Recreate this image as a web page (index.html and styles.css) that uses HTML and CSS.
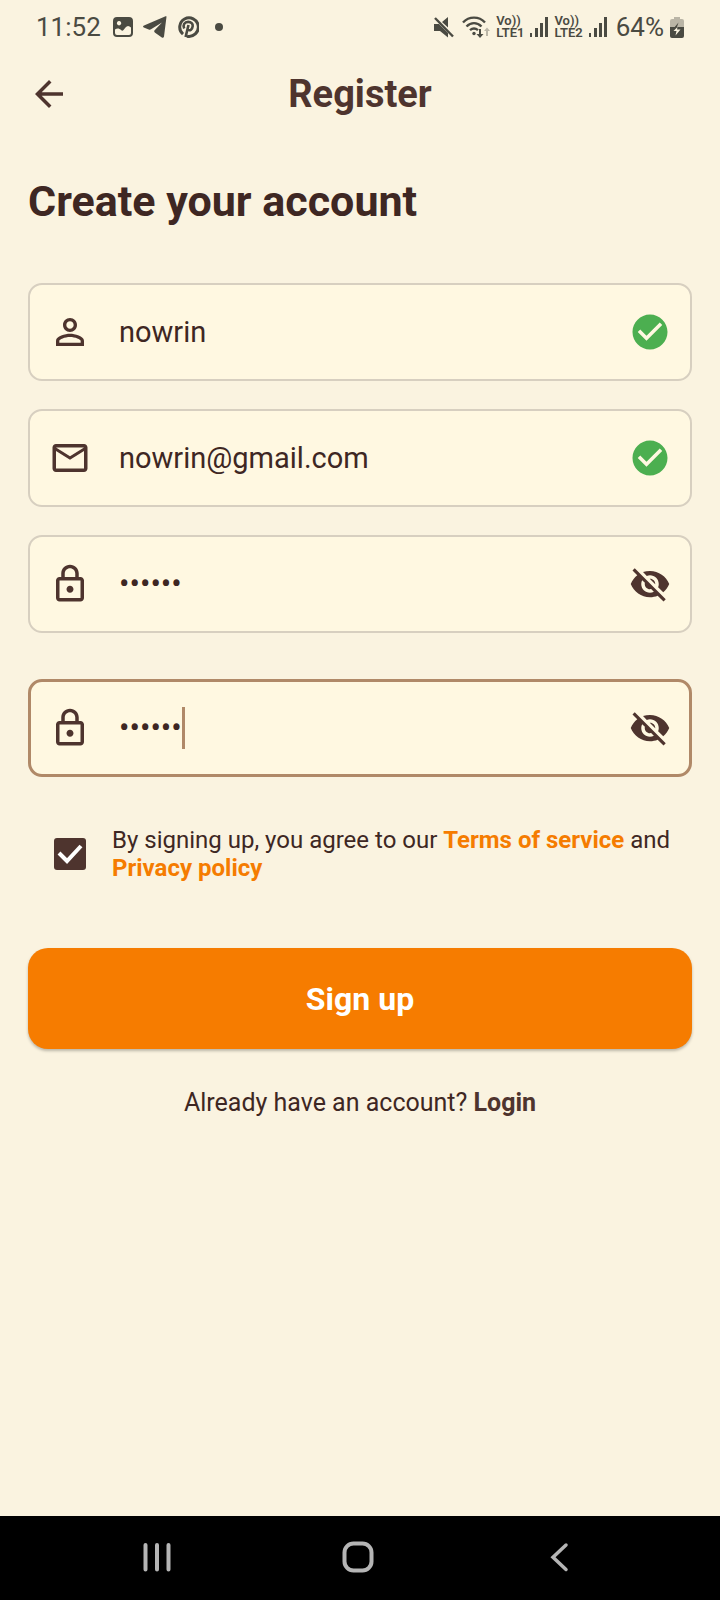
FILE: index.html
```html
<!DOCTYPE html>
<html lang="en">
<head>
<meta charset="utf-8">
<meta name="viewport" content="width=device-width, initial-scale=1">
<title>Register</title>
<link rel="stylesheet" href="styles.css">
</head>
<body class="screen">
  <svg class="sprite" aria-hidden="true">
    <symbol id="lock" viewBox="0 0 24 24"><path d="M18 8h-1V6c0-2.760-2.240-5-5-5S7 3.240 7 6v2H6c-1.100 0-2 .9-2 2v10c0 1.100.9 2 2 2h12c1.100 0 2-.9 2-2V10c0-1.100-.9-2-2-2zM9 6c0-1.660 1.340-3 3-3s3 1.340 3 3v2H9V6zm9 14H6V10h12v10zm-6-3c1.100 0 2-.9 2-2s-.9-2-2-2-2 .9-2 2 .9 2 2 2z"/></symbol>
    <symbol id="valid" viewBox="0 0 24 24"><path d="M12 2C6.480 2 2 6.480 2 12s4.480 10 10 10 10-4.480 10-10S17.520 2 12 2zm-2 15-5-5 1.410-1.410L10 14.170l7.590-7.590L19 8l-9 9z"/></symbol>
    <symbol id="hidden-eye" viewBox="0 0 24 24"><path d="M12 7c2.76 0 5 2.24 5 5 0 .65-.13 1.26-.36 1.83l2.92 2.92c1.51-1.26 2.7-2.89 3.43-4.75-1.73-4.39-6-7.5-11-7.5-1.4 0-2.74.25-3.98.7l2.16 2.16C10.74 7.13 11.35 7 12 7zM2 4.27l2.28 2.28.46.46C3.08 8.3 1.78 10.02 1 12c1.73 4.39 6 7.5 11 7.5 1.55 0 3.03-.3 4.38-.84l.42.42L19.73 22 21 20.73 3.27 3 2 4.27zM7.53 9.8l1.55 1.55c-.05.21-.08.43-.08.65 0 1.66 1.34 3 3 3 .22 0 .44-.03.65-.08l1.55 1.55c-.67.33-1.41.53-2.2.53-2.76 0-5-2.24-5-5 0-.79.2-1.53.53-2.2zm4.31-.78 3.15 3.15.02-.16c0-1.66-1.34-3-3-3l-.17.01z"/></symbol>
    <symbol id="signal" viewBox="0 0 18 20"><path d="M0 16h2v4H0zM5 11h3v9H5zM10 6h3v14h-3zM15 0h3v20h-3z"/></symbol>
  </svg>

  <div class="status">
    <div class="status-left">
      <span class="clock">11:52</span>
      <svg class="photo" width="20" height="20" viewBox="0 0 20 20" aria-hidden="true"><path fill-rule="evenodd" d="M4 0h12a4 4 0 0 1 4 4v12a4 4 0 0 1-4 4H4a4 4 0 0 1-4-4V4a4 4 0 0 1 4-4zM6 4a2.200 2.200 0 1 0 .1 0zM2 12.500v3.500a2 2 0 0 0 2 2h12a2 2 0 0 0 2-2v-5.500c-2-2-4-2-5.500 0L10.500 13c-.8 1-1.500 1-2.500 0-2-2-4-2-6-.5z"/></svg>
      <svg width="24" height="22" viewBox="0 0 24 22" aria-hidden="true"><path d="M23.500.8 21 20.500c-.2 1.200-1.200 1.500-2.200.9l-7-5c-.8-.6-.8-1.400-.2-2.100L19 6.500 8 13.300c-.8.5-1.500.4-2.300.1L.8 11.500c-1.100-.5-1-1.500.2-2L22 .4c.9-.3 1.600-.2 1.500.4z"/></svg>
      <svg width="22" height="22" viewBox="0 0 22 22" aria-hidden="true"><path class="line" stroke-width="3" d="M6 18.200A9.300 9.300 0 1 1 10 20.200"/><path class="line" stroke-width="2.600" d="M7.200 12.500C5.500 9 7.500 5.900 11.200 5.900c3 0 4.800 2 4.500 4.300-.3 3-2.700 5-4.700 3.600M11.500 9 8.600 21"/></svg>
      <span class="dot"></span>
    </div>
    <div class="status-right">
      <svg class="mute" width="20" height="21" viewBox="0 0 20 21" aria-hidden="true"><path d="M0 7h5l9 9v4.500L6 14H0zM8 5l6-5v10.500z"/><path class="line" stroke-width="2.400" d="M1 1l18 18.500"/></svg>
      <svg class="wifi" width="28" height="22" viewBox="0 0 28 22" aria-hidden="true"><g class="line" stroke-width="2.400"><path d="M1 6.500c6-6.500 16-6.500 22 0M4.500 10.500c4.500-4.500 10.500-4.500 15 0M8 14.200c2.500-2.200 5.500-2.200 8 0"/></g><circle cx="12" cy="17.500" r="1.700"/><path d="M17 13h2v5h2.500L18 22l-3.500-4H17z"/><path class="faint" d="M24 20v-5h-2l3-3.500 3 3.500h-2v5z"/></svg>
      <span class="volte">Vo))<br>LTE1</span>
      <svg width="18" height="20" aria-hidden="true"><use href="#signal"/></svg>
      <span class="volte">Vo))<br>LTE2</span>
      <svg width="18" height="20" aria-hidden="true"><use href="#signal"/></svg>
      <span class="percent">64%</span>
      <svg width="14" height="21" viewBox="0 0 14 21" aria-hidden="true"><path class="faint" d="M4 0h6v2h2a2 2 0 0 1 2 2v6H0V4a2 2 0 0 1 2-2h2z"/><path d="M0 10h14v9a2 2 0 0 1-2 2H2a2 2 0 0 1-2-2z"/><path d="M8.500 5.500 3 12h8l1-2H7z"/><path class="bolt" d="M7.500 10 3.500 14h3l-1 4.500 5-6H7z"/></svg>
    </div>
  </div>

  <header class="appbar">
    <button class="icon-button" type="button" aria-label="Back"><svg class="icon" viewBox="0 0 24 24"><path d="M20 11H7.830l5.590-5.590L12 4l-8 8 8 8 1.410-1.410L7.830 13H20v-2z"/></svg></button>
    <h1 class="title">Register</h1>
  </header>

  <main class="content">
    <h2 class="heading">Create your account</h2>
    <form class="form">
      <div class="field">
        <svg class="icon" viewBox="0 0 24 24" aria-hidden="true"><path d="M12 5.900c1.160 0 2.100.94 2.100 2.100s-.94 2.100-2.100 2.100S9.900 9.160 9.900 8s.94-2.100 2.100-2.100m0 9c2.970 0 6.100 1.460 6.100 2.100v1.100H5.900V17c0-.64 3.130-2.100 6.100-2.100M12 4C9.790 4 8 5.790 8 8s1.790 4 4 4 4-1.790 4-4-1.790-4-4-4zm0 9c-2.670 0-8 1.340-8 4v3h16v-3c0-2.660-5.330-4-8-4z"/></svg>
        <input class="input" type="text" aria-label="Name" value="nowrin">
        <svg class="icon valid" aria-hidden="true"><use href="#valid"/></svg>
      </div>
      <div class="field">
        <svg class="icon" viewBox="0 0 24 24" aria-hidden="true"><path d="M22 6c0-1.100-.9-2-2-2H4c-1.100 0-2 .9-2 2v12c0 1.100.9 2 2 2h16c1.100 0 2-.9 2-2V6zm-2 0-8 5-8-5h16zm0 12H4V8l8 5 8-5v10z"/></svg>
        <input class="input" type="email" aria-label="Email" value="nowrin@gmail.com">
        <svg class="icon valid" aria-hidden="true"><use href="#valid"/></svg>
      </div>
      <div class="field">
        <svg class="icon" aria-hidden="true"><use href="#lock"/></svg>
        <input class="input secret" type="password" aria-label="Password" value="secret">
        <button class="icon-button" type="button" aria-label="Show password"><svg class="icon"><use href="#hidden-eye"/></svg></button>
      </div>
      <div class="field focused">
        <svg class="icon" aria-hidden="true"><use href="#lock"/></svg>
        <div class="entry">
          <input class="input secret" type="password" aria-label="Confirm password" value="secret">
          <span class="caret"></span>
        </div>
        <button class="icon-button" type="button" aria-label="Show password"><svg class="icon"><use href="#hidden-eye"/></svg></button>
      </div>

      <div class="terms">
        <span class="check">
          <input class="box" type="checkbox" id="agree" checked>
          <svg class="tick" viewBox="0 0 32 32" aria-hidden="true"><path d="M5 15l8 8L27 8"/></svg>
        </span>
        <label class="terms-text" for="agree">By signing up, you agree to our <a class="accent" href="#">Terms of service</a> and <a class="accent" href="#">Privacy policy</a></label>
      </div>

      <button class="submit" type="button">Sign up</button>
    </form>
    <p class="login">Already have an account? <a class="login-link" href="#">Login</a></p>
  </main>

  <nav class="navbar">
    <button class="nav-button" type="button" aria-label="Recent apps"><svg width="32" height="32" viewBox="0 0 32 32"><path stroke-width="4" d="M4.500 4v24.500M16 4v24.500M27.500 4v24.500"/></svg></button>
    <button class="nav-button" type="button" aria-label="Home"><svg width="32" height="32" viewBox="0 0 32 32"><rect x="2.500" y="2.500" width="27" height="27" rx="9" stroke-width="4"/></svg></button>
    <button class="nav-button" type="button" aria-label="Back"><svg width="32" height="32" viewBox="0 0 32 32"><path stroke-width="3.500" d="M23 4 10 16.200 23 28.500"/></svg></button>
  </nav>
</body>
</html>
```
FILE: styles.css
```css
* { box-sizing: border-box; }

.screen {
  margin: 0;
  min-height: 100vh;
  display: flex;
  flex-direction: column;
  background: #faf3e0;
  color: #3e2723;
  font-family: Roboto, "Liberation Sans", sans-serif;
}

.sprite { position: absolute; width: 0; height: 0; }

.status {
  display: flex;
  justify-content: space-between;
  height: 54px;
  padding: 0 36px;
  color: #4a4a42;
}
.status svg { fill: currentColor; flex: none; }
.status .line { fill: none; stroke: currentColor; }
.status .faint { fill: #bab5a6; }
.status .bolt { fill: #faf3e0; }
.status-left, .status-right { display: flex; align-items: center; }
.status-left { gap: 10px; }
.status-right { gap: 6px; }
.clock, .percent { font-size: 26px; }
.photo { margin-left: 2px; }
.dot { width: 8px; height: 8px; margin-left: 6px; border-radius: 50%; background: currentColor; }
.mute { margin-right: 2px; }
.volte { font-size: 13px; line-height: 12px; font-weight: 600; }
.percent { margin-left: 3px; }

.appbar {
  display: grid;
  grid-template-columns: 42px 1fr 42px;
  align-items: center;
  height: 80px;
  padding: 0 28px;
  color: #4e342e;
}
.title { margin: 0; font-size: 38px; line-height: 44px; font-weight: 700; text-align: center; }

.icon { display: block; flex: none; width: 42px; height: 42px; fill: #4e342e; }
.icon-button { padding: 0; border: 0; background: none; }
.valid { fill: #4caf50; }

.content { flex: 1; padding: 43px 28px; }
.heading { margin: 0 0 58px; font-size: 43px; line-height: 48px; font-weight: 700; }
.form { display: flex; flex-direction: column; }

.field {
  display: flex;
  align-items: center;
  gap: 28px;
  height: 98px;
  margin-bottom: 28px;
  padding: 0 19px;
  border: 2px solid #d7cfc0;
  border-radius: 14px;
  background: #fff8e1;
}
.focused { margin-top: 18px; margin-bottom: 49px; padding: 0 18px; border: 3px solid #b08968; }
.input {
  flex: 1;
  min-width: 0;
  height: 42px;
  padding: 0;
  border: 0;
  outline: 0;
  background: none;
  color: #3e2723;
  font: 400 29px/42px Roboto, "Liberation Sans", sans-serif;
}
.secret { font-size: 31px; }
.entry { display: flex; flex: 1; min-width: 0; }
.entry .input { flex: none; field-sizing: content; caret-color: transparent; }
.caret { width: 3px; height: 42px; background: #b08968; }

.terms { display: flex; align-items: center; gap: 26px; padding-left: 26px; font-size: 24px; line-height: 28px; }
.check { display: grid; flex: none; }
.box, .tick { grid-area: 1 / 1; width: 32px; height: 32px; margin: 0; }
.box { appearance: none; border-radius: 3px; background: #4e342e; }
.tick { fill: none; stroke: #fff; stroke-width: 4; pointer-events: none; }
.accent { color: #f57c00; font-weight: 700; text-decoration: none; }

.submit {
  height: 101px;
  margin-top: 66px;
  border: 0;
  border-radius: 20px;
  background: #f67c00;
  box-shadow: 0 2px 3px rgba(0, 0, 0, 0.25);
  color: #fff;
  font: 700 32px/36px Roboto, "Liberation Sans", sans-serif;
}
.login { margin: 40px 0 0; font-size: 25px; line-height: 28px; text-align: center; }
.login-link { color: #4e342e; font-weight: 700; text-decoration: none; }

.navbar {
  display: flex;
  justify-content: space-around;
  align-items: center;
  height: 84px;
  padding: 0 60px 2px 56px;
  background: #000;
}
.nav-button { padding: 0; border: 0; background: none; }
.nav-button svg { display: block; fill: none; stroke: #b5b5b5; stroke-linecap: round; }
```
